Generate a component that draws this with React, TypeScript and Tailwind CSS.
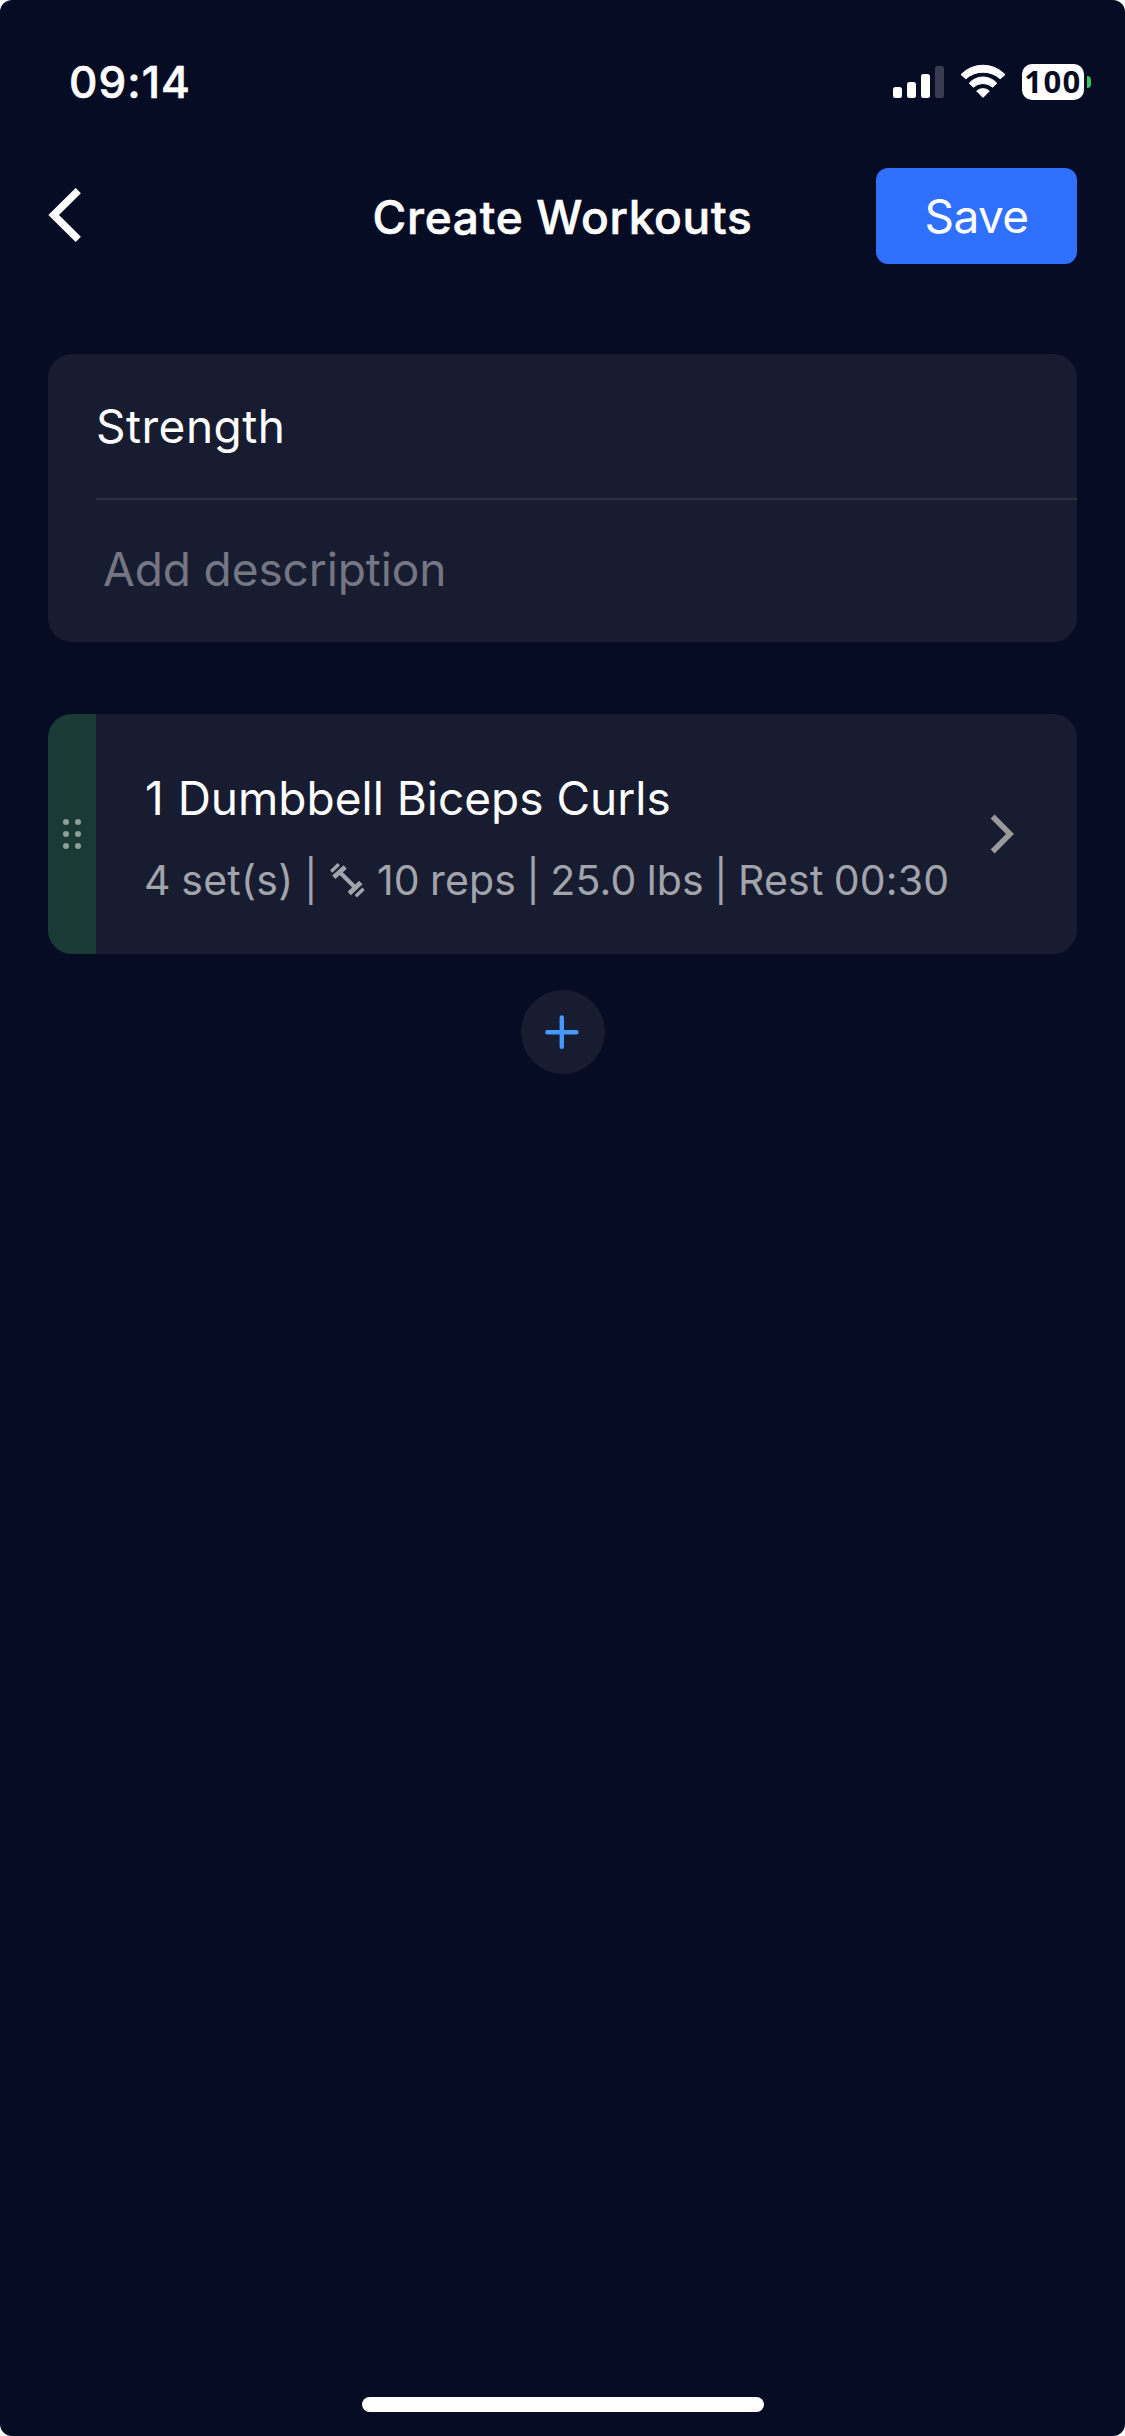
const dots = [3, 15, 27]

function StatusBar() {
  return (
    <div className="flex h-[164px] items-center pl-[69px] pr-[34px]">
      <span className="text-[44px] font-medium leading-[54px] tracking-[1.1px] [-webkit-text-stroke:0.6px_white]">
        09:14
      </span>

      <div className="ml-auto flex items-center">
        {/* Signal */}
        <svg className="h-8 w-[51px]" viewBox="0 0 51 32" fill="#fff">
          <rect x="0" y="21" width="9" height="11" rx="2.5" />
          <rect x="14" y="16" width="9" height="16" rx="2.5" />
          <rect x="28" y="8" width="9" height="24" rx="2.5" />
          <rect x="42" y="0" width="9" height="32" rx="2.5" opacity="0.2" />
        </svg>

        {/* Wifi */}
        <svg className="ml-4 h-9 w-[46px]" viewBox="0 0 46 36" fill="#fff" stroke="#fff" strokeLinejoin="round">
          <path d="M1 10.6A30.5 30.5 0 0 1 45 10.6L40.2 14.8A25.7 25.7 0 0 0 5.8 14.8Z" />
          <path d="M9.2 19.2A18.5 18.5 0 0 1 36.8 19.2L32.6 23.2A14.3 14.3 0 0 0 13.4 23.2Z" />
          <path d="M16.7 27A9.6 9.6 0 0 1 29.3 27L23 33.4Z" />
        </svg>

        {/* Battery */}
        <div className="ml-4 flex h-9 w-[62px] items-center justify-center rounded-[10px] bg-white pb-0.5">
          <span className="font-['Open_Sans',sans-serif] text-[31px] font-bold leading-9 tracking-[1.4px] text-[#070c25]">
            100
          </span>
        </div>
        <div className="ml-[3px] h-3 w-1 rounded-r-full bg-[#34c759]" />
      </div>
    </div>
  )
}

function Header() {
  return (
    <header className="flex h-[104px] items-center px-12">
      <div className="w-[201px]">
        <svg className="mb-0.5 h-[54px] w-[34px]" viewBox="0 0 34 54" fill="none" stroke="#fff" strokeWidth="7.4">
          <path d="M30.3 2.6L5.6 27L30.3 51.4" />
        </svg>
      </div>
      <h1 className="flex-1 whitespace-nowrap pt-0.5 text-center text-[46px] font-medium leading-[56px] tracking-[0.72px] [-webkit-text-stroke:0.6px_white]">
        Create Workouts
      </h1>
      <button className="h-24 w-[201px] rounded-xl bg-[#2f70ff] text-[46px] leading-[56px] tracking-[-0.6px]">
        Save
      </button>
    </header>
  )
}

function DumbbellIcon() {
  return (
    <svg className="ml-3 mr-3 h-[35px] w-[35px]" viewBox="0 0 35 35" fill="none" stroke="currentColor">
      <path strokeWidth="3.4" d="M1.2 8.4L8.8 1.2M25.8 33.2L33.6 25.8" />
      <path strokeWidth="4.8" d="M3.8 14.2L15.2 4M19.2 30.6L30.8 19.6" />
      <path strokeWidth="4.2" d="M9.5 9L25.2 24.6" />
    </svg>
  )
}

export default function App() {
  return (
    <div className="h-[2436px] w-[1125px] bg-white">
      <div className="flex h-full flex-col rounded-xl bg-[#070c25] font-['Inter',sans-serif] text-white">
        <StatusBar />
        <Header />

        <main className="flex-1 px-12 pt-[86px]">
          {/* Name and description */}
          <section className="h-72 rounded-3xl bg-[#181c30] pl-12">
            <div className="flex h-36 items-center text-[46px] leading-[56px] tracking-[0.5px]">
              Strength
            </div>
            <div className="flex h-36 items-center border-t-2 border-[#2c3043] pb-1 pl-[7px] text-[46px] leading-[56px] tracking-[-0.1px] text-[#747683]">
              Add description
            </div>
          </section>

          {/* Exercise */}
          <section className="mt-[72px] flex h-60 overflow-hidden rounded-3xl bg-[#181c30]">
            <div className="flex w-12 items-center justify-center bg-[#193a35]">
              <svg className="h-[30px] w-[18px]" viewBox="0 0 18 30" fill="#8c9d9a">
                {dots.map((y) => (
                  <g key={y}>
                    <circle cx="3" cy={y} r="3" />
                    <circle cx="15" cy={y} r="3" />
                  </g>
                ))}
              </svg>
            </div>
            <div className="flex flex-1 flex-col whitespace-nowrap pl-12 pt-[54px]">
              <p className="pl-px text-[46px] leading-[60px]">
                <span className="mr-px">1</span> Dumbbell Biceps Curls
              </p>
              <div className="mt-[27px] flex items-center text-[41px] leading-[50px] text-[#a2a4ac]">
                <span className="tracking-[0.3px] [word-spacing:-1.4px]">4 set(s) |</span>
                <DumbbellIcon />
                <span className="tracking-[0.2px] [word-spacing:-1.6px]">10 reps | 25.0 lbs | Rest 00:30</span>
              </div>
            </div>
            <div className="flex items-center pr-[63px]">
              <svg
                className="h-10 w-6"
                viewBox="0 0 24 40"
                fill="none"
                stroke="#9a9a9d"
                strokeWidth="5.6"
              >
                <path d="M2.6 2.6L20 20L2.6 37.4" />
              </svg>
            </div>
          </section>

          <button className="mx-auto mt-9 flex h-[84px] w-[84px] rounded-full bg-[#181c30]">
            <svg viewBox="0 0 84 84" stroke="#4599ff" strokeWidth="4.4" strokeLinecap="round">
              <path d="M26.4 42.2H55.4M40.8 27.4V56.8" />
            </svg>
          </button>
        </main>

        {/* Home indicator */}
        <div className="mb-6 ml-[362px] h-[15px] w-[402px] rounded-full bg-white" />
      </div>
    </div>
  )
}
